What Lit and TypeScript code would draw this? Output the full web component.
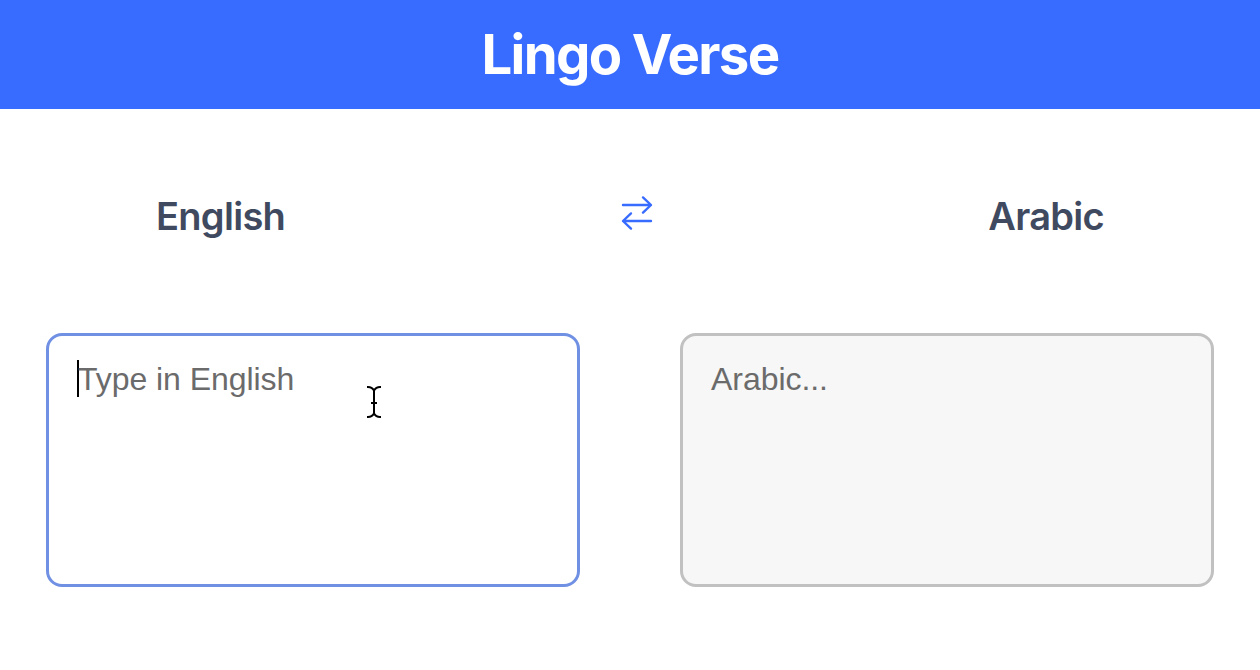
import { LitElement, html, css } from "lit";
import { customElement } from "lit/decorators.js";

@customElement("app-root")
export class AppRoot extends LitElement {
  static styles = css`
    :host {
      display: flex;
      flex-direction: column;
      position: relative;
      box-sizing: border-box;
      width: 100%;
      height: 670px;
      overflow: hidden;
      background: #fff;
      font-family: Inter, "Liberation Sans", sans-serif;
    }
    header {
      height: 109px;
      box-sizing: border-box;
      display: flex;
      justify-content: center;
      background: #386bff;
    }
    h1 {
      margin: 0;
      line-height: 109px;
      font-size: 54.5px;
      font-weight: 700;
      letter-spacing: -1.65px;
      color: #fff;
      white-space: nowrap;
    }
    .languages {
      display: flex;
      justify-content: space-between;
      align-items: center;
      height: 216px;
      padding: 0 156px 0 155px;
    }
    h2 {
      margin: 0;
      padding-bottom: 2px;
      font-size: 38px;
      line-height: 46px;
      font-weight: 600;
      letter-spacing: -0.7px;
      color: #3f4a60;
      white-space: nowrap;
    }
    .swap {
      width: 32px;
      height: 36px;
      margin: 0 0 8px 1px;
    }
    .panels {
      display: grid;
      grid-template-columns: 534px 534px;
      column-gap: 100px;
      padding: 8px 46px 0;
    }
    .field {
      box-sizing: border-box;
      height: 254px;
      border: 3px solid #7090e3;
      border-radius: 16px;
      padding: 24px 28px;
      display: flex;
      align-items: flex-start;
      font-family: "Liberation Sans", Arial, sans-serif;
      font-size: 32px;
      line-height: 38px;
      letter-spacing: -0.05px;
      color: #6b6b6b;
      white-space: nowrap;
    }
    .output {
      border-color: #c1c1c1;
      background: #f7f7f7;
    }
    .caret {
      width: 2px;
      height: 37px;
      background: #000;
      margin-right: -1px;
    }
    .source {
      padding-left: 1px;
    }
    .pointer {
      position: absolute;
      left: 364px;
      top: 384px;
      width: 20px;
      height: 36px;
    }
  `;

  render() {
    return html`
      <header><h1>Lingo Verse</h1></header>
      <section class="languages">
        <h2 class="source">English</h2>
        <svg class="swap" viewBox="0 0 32 36" fill="none" stroke="#386bff"
          stroke-width="2.4" stroke-linecap="round" stroke-linejoin="round">
          <path d="M2 10H30L22 2.4M30 10L22 17.6" />
          <path d="M30 26H2L10 18.4M2 26L10 33.6" />
        </svg>
        <h2 class="target">Arabic</h2>
      </section>
      <section class="panels">
        <div class="field"><i class="caret"></i><span>Type in English</span></div>
        <div class="field output"><span>Arabic...</span></div>
      </section>
      <svg class="pointer" viewBox="0 0 20 36" fill="none" stroke="#000" stroke-width="2">
        <path d="M3 3H4Q8 3 10 6.5Q12 3 16 3H17M10 6V30M3 33H4Q8 33 10 29.5Q12 33 16 33H17M7 19H13" />
      </svg>
    `;
  }
}
